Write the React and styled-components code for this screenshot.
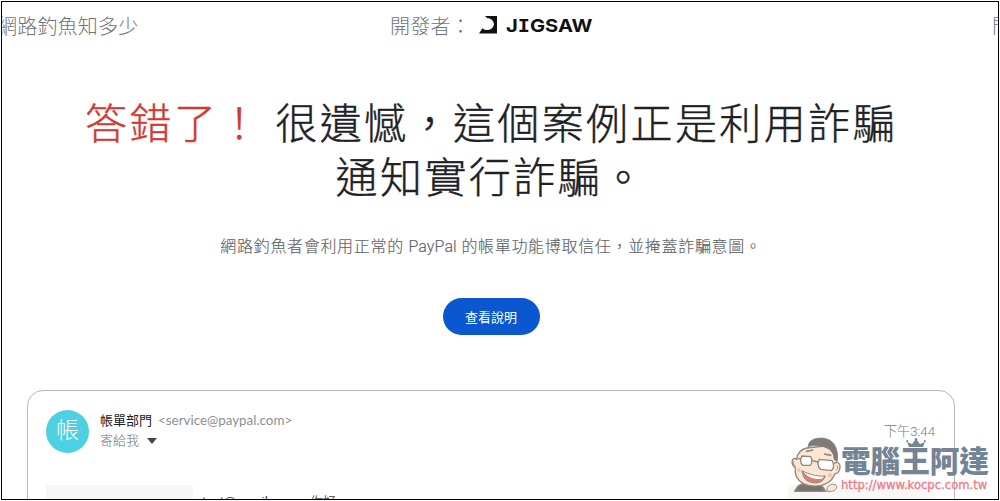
import React from "react";
import styled, { createGlobalStyle } from "styled-components";

const GlobalStyle = createGlobalStyle`
  * {
    box-sizing: border-box;
  }
  body {
    margin: 0;
    background: #fff;
    font-family: Roboto, "Noto Sans CJK TC", sans-serif;
  }
`;

const Frame = styled.div`
  position: relative;
  width: 998px;
  height: 499px;
  margin: 1px;
  border: 1px solid #000;
  overflow: hidden;
  white-space: nowrap;
`;

const Header = styled.header`
  display: grid;
  grid-template-columns: 393px 602px 20px;
  align-items: center;
  height: 46px;
  margin-left: -5px;
  color: #6f7378;
  font-size: 20px;
  font-weight: 300;
  letter-spacing: 0.2px;
`;

const Developer = styled.div`
  display: flex;
  align-items: center;
`;

const JigsawMark = styled.svg`
  width: 19px;
  height: 18px;
  margin-left: 8px;
`;

const JigsawName = styled.span`
  margin-left: 8px;
  color: #111;
  font-family: Inter, sans-serif;
  font-size: 18px;
  font-weight: 700;
  letter-spacing: 0;
  transform: scaleX(1.12);
  transform-origin: left center;
`;

const SlabLetter = styled.span`
  font-family: "DejaVu Sans Mono", monospace;
  font-weight: 700;
`;

const Result = styled.main`
  display: flex;
  flex-direction: column;
  align-items: center;
  width: 978px;
  padding-top: 50px;
`;

const Title = styled.h1`
  margin: 0;
  color: #202124;
  font-size: 42px;
  font-weight: 300;
  line-height: 54px;
  letter-spacing: 2.4px;
  text-align: center;
  -webkit-text-stroke: 0.4px currentColor;
`;

const Wrong = styled.span`
  color: #d13a32;
`;

const Description = styled.p`
  margin: 29px 0 0;
  color: #5f6368;
  font-size: 16px;
  font-weight: 300;
  line-height: 24px;
  letter-spacing: 0.68px;
  -webkit-text-stroke: 0.15px currentColor;
`;

const Latin = styled.span`
  letter-spacing: 0.1px;
`;

const ShowButton = styled.button`
  width: 97px;
  height: 37px;
  margin-top: 39px;
  border: 0;
  border-radius: 19px;
  background: #0b57d0;
  color: #fff;
  font-family: inherit;
  font-size: 13px;
  padding: 0;
`;

const Mail = styled.section`
  width: 928px;
  height: 160px;
  margin: 55px 0 0 25px;
  padding: 19px 19px 0 18px;
  border: 1px solid #b8b8b8;
  border-radius: 16px;
`;

const MailHeader = styled.div`
  display: flex;
  height: 75px;
`;

const Avatar = styled.div`
  width: 43px;
  height: 43px;
  border-radius: 50%;
  background: #4dd0e1;
  color: #fff;
  font-size: 23px;
  font-weight: 300;
  line-height: 41px;
  text-align: center;
`;

const Sender = styled.div`
  margin-left: 11px;
  color: #202124;
  font-size: 13px;
  line-height: 20px;
`;

const Address = styled.span`
  margin-left: 6px;
  color: #8b8f93;
  font-family: Lato, sans-serif;
  font-size: 13.4px;
`;

const Recipient = styled.div`
  display: flex;
  align-items: center;
  color: #6f7378;
  font-weight: 300;
`;

const Caret = styled.span`
  margin-left: 8px;
  border: 5px solid transparent;
  border-top: 6px solid #444;
  border-bottom: 0;
`;

const Time = styled.div`
  margin: 12px 0 0 auto;
  color: #777b80;
  font-size: 13.2px;
  line-height: 20px;
  font-weight: 300;
`;

const MailBody = styled.div`
  display: flex;
`;

const Panel = styled.div`
  width: 147px;
  height: 50px;
  background: #f8f7f5;
`;

const Greeting = styled.div`
  flex: 1;
  margin-left: 9px;
  color: #666;
  font-size: 13px;
  line-height: 34px;
`;

const MailLink = styled.span`
  color: #24466f;
`;

const Watermark = styled.div`
  position: absolute;
  left: 786px;
  top: 432px;
  display: flex;
`;

const Face = styled.svg`
  width: 56px;
  height: 60px;
`;

const Brand = styled.div`
  position: relative;
  margin-left: -3px;
  color: #738496;
  font-size: 29.6px;
  font-weight: 900;
  line-height: 30px;
  padding-top: 13px;
`;

const Crown = styled.svg`
  position: absolute;
  left: 65px;
  top: 4px;
  width: 20px;
  height: 10px;
`;

const Url = styled.div`
  margin-top: 1px;
  color: #ec7c86;
  font-family: "DejaVu Sans", sans-serif;
  font-size: 11.6px;
  font-weight: 400;
  line-height: 14px;
  -webkit-text-stroke: 0.3px currentColor;
`;

const Mascot = () => (
  <Face viewBox="0 0 168 180" fill="none" stroke="#94867d" strokeWidth="4" strokeLinejoin="round">
    <path d="M20 172C26 156 40 148 54 148L98 154C106 158 110 166 112 172Z" fill="#77736f" />
    <path
      d="M56 42C38 46 28 58 26 76C12 66 6 90 22 102C18 132 40 154 74 156C108 158 132 144 140 120C158 116 162 90 146 84C152 58 144 40 130 34Z"
      fill="#fbe8d4"
    />
    <path
      d="M60 38C62 22 74 14 90 13C112 8 138 20 144 42C148 54 148 70 146 82L138 76C138 60 130 48 116 42C98 34 78 32 60 38Z"
      fill="#807b78"
      stroke="#807b78"
      strokeWidth="2"
    />
    <path d="M146 94C152 98 150 106 144 108M18 82C14 88 18 94 24 98" strokeWidth="3" />
    <path d="M54 52L76 48M108 60L130 64" strokeWidth="5" />
    <path d="M42 66L68 68C74 76 72 90 66 94L44 94C36 86 36 74 42 66Z" fill="#fff" />
    <path d="M94 76L132 80C140 90 138 104 130 110L98 106C88 98 88 84 94 76Z" fill="#fff" />
    <path d="M71 80L90 84M137 88L146 86M38 76L28 72" />
    <path d="M42 110C64 122 88 128 112 126C104 148 84 150 66 144C52 140 44 128 42 110Z" fill="#d5817a" strokeWidth="3" />
    <path d="M46 114C68 124 86 128 108 128L102 134C82 138 60 130 46 114Z" fill="#fff" stroke="none" />
    <path d="M118 160C124 150 138 148 144 154C150 162 140 172 130 172H116Z" fill="#fbe8d4" strokeWidth="3" />
    <circle cx="33" cy="108" r="6" fill="#f7c4ae" stroke="none" />
    <circle cx="126" cy="124" r="7" fill="#f7c4ae" stroke="none" />
  </Face>
);

const App = () => (
  <>
    <GlobalStyle />
    <Frame>
      <Header>
        <span>網路釣魚知多少</span>
        <Developer>
          開發者：
          <JigsawMark viewBox="0 0 19 18">
            <path d="M6 0H18V17.5H0L3.4 12.2A7 7 0 0 0 15 8.5A7 7 0 0 0 8 2Z" fill="#111" />
          </JigsawMark>
          <JigsawName>
            J<SlabLetter>I</SlabLetter>GSAW
          </JigsawName>
        </Developer>
        <span>問</span>
      </Header>
      <Result>
        <Title>
          <Wrong>答錯了！</Wrong> 很遺憾，這個案例正是利用詐騙
          <br />
          通知實行詐騙。
        </Title>
        <Description>
          網路釣魚者會利用正常的 <Latin>PayPal</Latin> 的帳單功能博取信任，並掩蓋詐騙意圖。
        </Description>
        <ShowButton>查看說明</ShowButton>
      </Result>
      <Mail>
        <MailHeader>
          <Avatar>帳</Avatar>
          <Sender>
            帳單部門<Address>&lt;service@paypal.com&gt;</Address>
            <Recipient>
              寄給我
              <Caret />
            </Recipient>
          </Sender>
          <Time>下午3:44</Time>
        </MailHeader>
        <MailBody>
          <Panel />
          <Greeting>
            <MailLink>test@gmail.com</MailLink>，你好
          </Greeting>
          <Panel />
        </MailBody>
      </Mail>
      <Watermark>
        <Mascot />
        <Brand>
          <Crown viewBox="0 0 20 10">
            <path d="M3 9L1 4L6 6L10 1L14 6L19 4L17 9Z" fill="#738496" />
            <circle cx="1.2" cy="3" r="1.1" fill="#738496" />
            <circle cx="10" cy="1.2" r="1.2" fill="#738496" />
            <circle cx="18.8" cy="3" r="1.1" fill="#738496" />
          </Crown>
          電腦王阿達
          <Url>http://www.kocpc.com.tw</Url>
        </Brand>
      </Watermark>
    </Frame>
  </>
);

export default App;
